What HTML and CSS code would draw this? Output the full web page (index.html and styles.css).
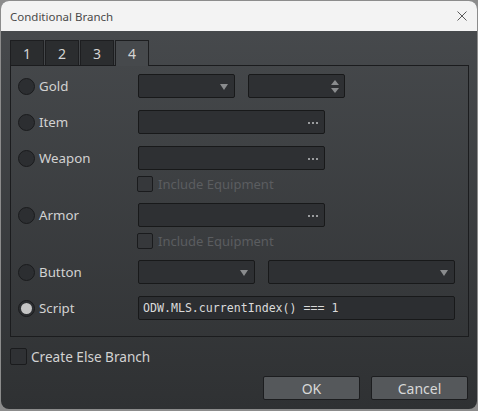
FILE: index.html
```html
<!DOCTYPE html>
<html lang="en">
<head>
<meta charset="utf-8">
<title>Conditional Branch</title>
<link rel="stylesheet" href="styles.css">
</head>
<body>
<div class="window">
  <header class="titlebar">
    <span class="title">Conditional Branch</span>
    <svg class="close" width="10" height="10" viewBox="0 0 10 10">
      <path d="M0.5 0.5 L9.5 9.5 M9.5 0.5 L0.5 9.5" stroke="#5a5a5a" stroke-width="1" fill="none"/>
    </svg>
  </header>
  <div class="client">
    <div class="tabs">
      <div class="tab">1</div>
      <div class="tab">2</div>
      <div class="tab">3</div>
      <div class="tab active">4</div>
    </div>
    <div class="panel">
      <div class="row">
        <div class="choice"><span class="radio"></span>Gold</div>
        <div class="controls">
          <div class="field combo w97"><span class="arrow"></span></div>
          <div class="field spin w97">
            <span class="spin-arrows"><span class="up"></span><span class="down"></span></span>
          </div>
        </div>
      </div>
      <div class="row">
        <div class="choice"><span class="radio"></span>Item</div>
        <div class="controls">
          <div class="field picker w188"><span class="dots"><i></i><i></i><i></i></span></div>
        </div>
      </div>
      <div class="row">
        <div class="choice"><span class="radio"></span>Weapon</div>
        <div class="controls">
          <div class="field picker w188"><span class="dots"><i></i><i></i><i></i></span></div>
        </div>
      </div>
      <div class="sub">
        <span class="check"></span><span class="disabled">Include Equipment</span>
      </div>
      <div class="row">
        <div class="choice"><span class="radio"></span>Armor</div>
        <div class="controls">
          <div class="field picker w188"><span class="dots"><i></i><i></i><i></i></span></div>
        </div>
      </div>
      <div class="sub">
        <span class="check"></span><span class="disabled">Include Equipment</span>
      </div>
      <div class="row">
        <div class="choice"><span class="radio"></span>Button</div>
        <div class="controls gap13">
          <div class="field combo w118"><span class="arrow"></span></div>
          <div class="field combo w188"><span class="arrow"></span></div>
        </div>
      </div>
      <div class="row">
        <div class="choice"><span class="radio on"></span>Script</div>
        <div class="controls">
          <div class="field text w318">ODW.MLS.currentIndex() === 1</div>
        </div>
      </div>
    </div>
    <div class="else-row">
      <span class="check"></span>Create Else Branch
    </div>
    <div class="buttons">
      <button class="btn">OK</button>
      <button class="btn">Cancel</button>
    </div>
  </div>
</div>
</body>
</html>
```

FILE: styles.css
```css
html, body {
  margin: 0;
  padding: 0;
}

body {
  width: 478px;
  height: 411px;
  background: #8c8c8c;
  font-family: "Noto Sans", "Open Sans", sans-serif;
  overflow: hidden;
}

.window {
  margin: 1px 0 0 1px;
  width: 476px;
  height: 408px;
  border-radius: 8px;
  overflow: hidden;
  display: flex;
  flex-direction: column;
  background: linear-gradient(#484b4e, #2f3133);
}

/* title bar */
.titlebar {
  height: 30px;
  flex: none;
  background: #f3f3f3;
  display: flex;
  align-items: center;
  justify-content: space-between;
  padding: 0 10px 0 9px;
}

.title {
  font-size: 11.5px;
  color: #4a4a4a;
  font-family: "Noto Sans", sans-serif;
}

.close {
  margin-top: -1px;
}

/* client area */
.client {
  flex: 1;
  display: flex;
  flex-direction: column;
  padding: 9px 8px 0 9px;
}

.tabs {
  display: flex;
  height: 25px;
  position: relative;
  z-index: 1;
}

.tab {
  width: 32px;
  height: 24px;
  margin-right: 1px;
  border: 1px solid #1d1e20;
  border-bottom: none;
  background: #2b2d2f;
  color: #d4d4d4;
  font-size: 14px;
  display: flex;
  align-items: center;
  justify-content: center;
  border-radius: 1px 1px 0 0;
}

.tab.active {
  height: 25px;
  background: #46494c;
}

.panel {
  border: 1px solid #1b1c1e;
  padding: 8px 0 16px 0;
  display: flex;
  flex-direction: column;
}

.row {
  display: flex;
  align-items: center;
  height: 24px;
  margin-top: 12px;
}

.row:first-child {
  margin-top: 0;
}

.sub + .row {
  margin-top: 11px;
}

.choice {
  width: 120px;
  padding-left: 7px;
  display: flex;
  align-items: center;
  color: #d2d2d2;
  font-size: 13.3px;
}

.radio {
  width: 15px;
  height: 15px;
  border-radius: 50%;
  border: 1px solid #1a1b1d;
  background: #2c2e31;
  margin-right: 4px;
  position: relative;
  flex: none;
}

.radio.on::after {
  content: "";
  position: absolute;
  left: 2px;
  top: 2px;
  width: 11px;
  height: 11px;
  border-radius: 50%;
  background: #c4c4c4;
}

.controls {
  display: flex;
  gap: 13px;
}

.field {
  height: 22px;
  border: 1px solid #18191a;
  border-radius: 2px;
  background: #2e3033;
  display: flex;
  align-items: center;
  justify-content: flex-end;
  box-sizing: content-box;
}

.w97 { width: 95px; }
.w118 { width: 115px; }
.w188 { width: 185px; }
.w318 { width: 315px; }

.arrow {
  width: 0;
  height: 0;
  border-left: 4px solid transparent;
  border-right: 4px solid transparent;
  border-top: 6px solid #8a8c8e;
  margin-right: 6px;
  margin-top: 1px;
}

.spin-arrows {
  display: flex;
  flex-direction: column;
  gap: 3px;
  margin-right: 5px;
}

.spin-arrows .up {
  border-left: 4px solid transparent;
  border-right: 4px solid transparent;
  border-bottom: 5px solid #8a8c8e;
}

.spin-arrows .down {
  border-left: 4px solid transparent;
  border-right: 4px solid transparent;
  border-top: 5px solid #8a8c8e;
}

.dots {
  display: flex;
  gap: 2px;
  margin-right: 6px;
  margin-top: 2px;
}

.dots i {
  width: 2px;
  height: 2px;
  background: #9a9c9e;
}

.field.text {
  justify-content: flex-start;
  padding-left: 4px;
  width: 311px;
  font-family: "DejaVu Sans Mono", monospace;
  font-size: 11.6px;
  color: #dadada;
  background: #2c2e31;
}

.sub {
  display: flex;
  align-items: center;
  height: 16px;
  margin-top: 6px;
  padding-left: 126px;
  font-size: 13px;
}

.check {
  width: 14px;
  height: 14px;
  border: 1px solid #1a1b1d;
  border-radius: 2px;
  background: #36383b;
  margin-right: 5px;
  flex: none;
}

.disabled {
  color: #5b5d60;
}

.else-row {
  display: flex;
  align-items: center;
  margin-top: 11px;
  height: 17px;
  color: #d2d2d2;
  font-size: 13.6px;
}

.else-row .check {
  width: 15px;
  height: 15px;
  margin-right: 4px;
  background: #2f3134;
}

.buttons {
  display: flex;
  justify-content: flex-end;
  gap: 11px;
  margin-top: 11px;
  padding-right: 1px;
}

.btn {
  width: 97px;
  height: 24px;
  border: 1px solid #1c1d1f;
  border-radius: 2px;
  background: #55585b;
  color: #d8d8d8;
  font-family: "Noto Sans", sans-serif;
  font-size: 14px;
  padding: 0;
}
```
